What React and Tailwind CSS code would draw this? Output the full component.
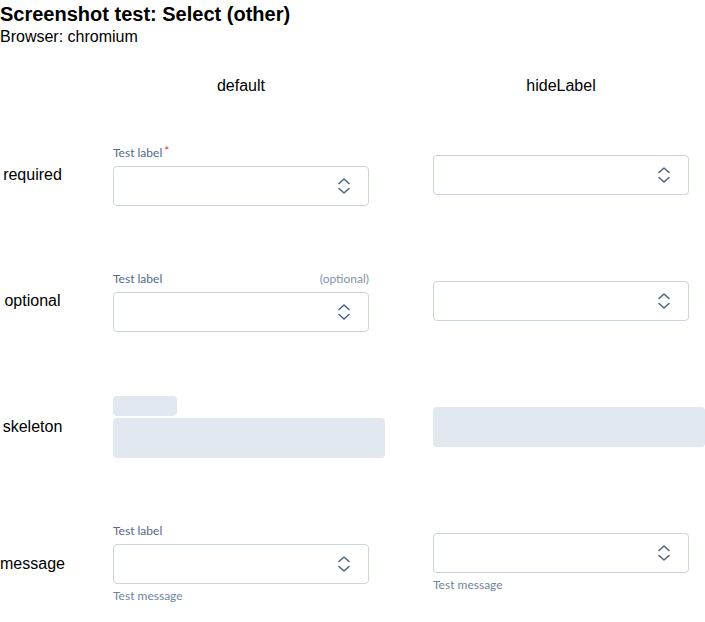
import { Fragment } from 'react'

function Chevrons() {
  return (
    <svg width="14" height="18" viewBox="0 0 14 18" fill="none" stroke="#4d6782" strokeWidth="1.6" strokeLinecap="round" strokeLinejoin="round">
      <path d="M2 6.5 L7 2 L12 6.5" />
      <path d="M2 11.5 L7 16 L12 11.5" />
    </svg>
  )
}

function SelectBox() {
  return (
    <div className="w-[256px] h-[40px] rounded-[4px] border border-[#c9d4df] bg-white flex items-center justify-end pr-[17px]">
      <Chevrons />
    </div>
  )
}

function Label({ required, optional }) {
  return (
    <div className="w-[256px] flex items-center justify-between h-[18px] mb-[4px] text-[12px] leading-[18px]">
      <span className="text-[#52698a]">
        Test label
        {required && <span className="text-[#e0313b] ml-[2px] relative -top-[2px]">*</span>}
      </span>
      {optional && <span className="text-[#7f93a9]">(optional)</span>}
    </div>
  )
}

function Message() {
  return <div className="mt-[3px] text-[12px] leading-[18px] text-[#6f849c]">Test message</div>
}

const rows = [
  {
    name: 'required',
    def: (
      <>
        <Label required />
        <SelectBox />
      </>
    ),
    hide: <SelectBox />,
  },
  {
    name: 'optional',
    def: (
      <>
        <Label optional />
        <SelectBox />
      </>
    ),
    hide: <SelectBox />,
  },
  {
    name: 'skeleton',
    def: (
      <>
        <div className="w-[64px] h-[20px] rounded-[4px] bg-[#e2e8f0] mb-[2px]" />
        <div className="w-[272px] h-[40px] rounded-[4px] bg-[#e2e8f0]" />
      </>
    ),
    hide: <div className="w-[272px] h-[40px] rounded-[4px] bg-[#e2e8f0]" />,
  },
  {
    name: 'message',
    def: (
      <>
        <Label />
        <SelectBox />
        <Message />
      </>
    ),
    hide: (
      <>
        <SelectBox />
        <Message />
      </>
    ),
  },
]

export default function App() {
  return (
    <div className="w-[705px] h-[622px] overflow-hidden bg-white text-black font-['Liberation_Sans',Arial,sans-serif]">
      <h1 className="text-[20px] leading-[28px] font-bold">Screenshot test: Select (other)</h1>
      <div className="text-[16px] leading-[18px]">Browser: chromium</div>

      <div className="grid grid-cols-[65px_368px_272px] items-center">
        {/* header row */}
        <div />
        <div className="pl-[48px] pt-[31px] pb-[17px]">
          <div className="w-[256px] text-center text-[16px] leading-[18px]">default</div>
        </div>
        <div className="pt-[31px] pb-[17px]">
          <div className="w-[256px] text-center text-[16px] leading-[18px]">hideLabel</div>
        </div>

        {rows.map((row) => (
          <Fragment key={row.name}>
            <div className="text-center text-[16px] leading-[18px]">{row.name}</div>
            <div className="pl-[48px] py-[32px] font-['Lato','Noto_Sans',sans-serif]">{row.def}</div>
            <div className="font-['Lato','Noto_Sans',sans-serif]">{row.hide}</div>
          </Fragment>
        ))}
      </div>
    </div>
  )
}
